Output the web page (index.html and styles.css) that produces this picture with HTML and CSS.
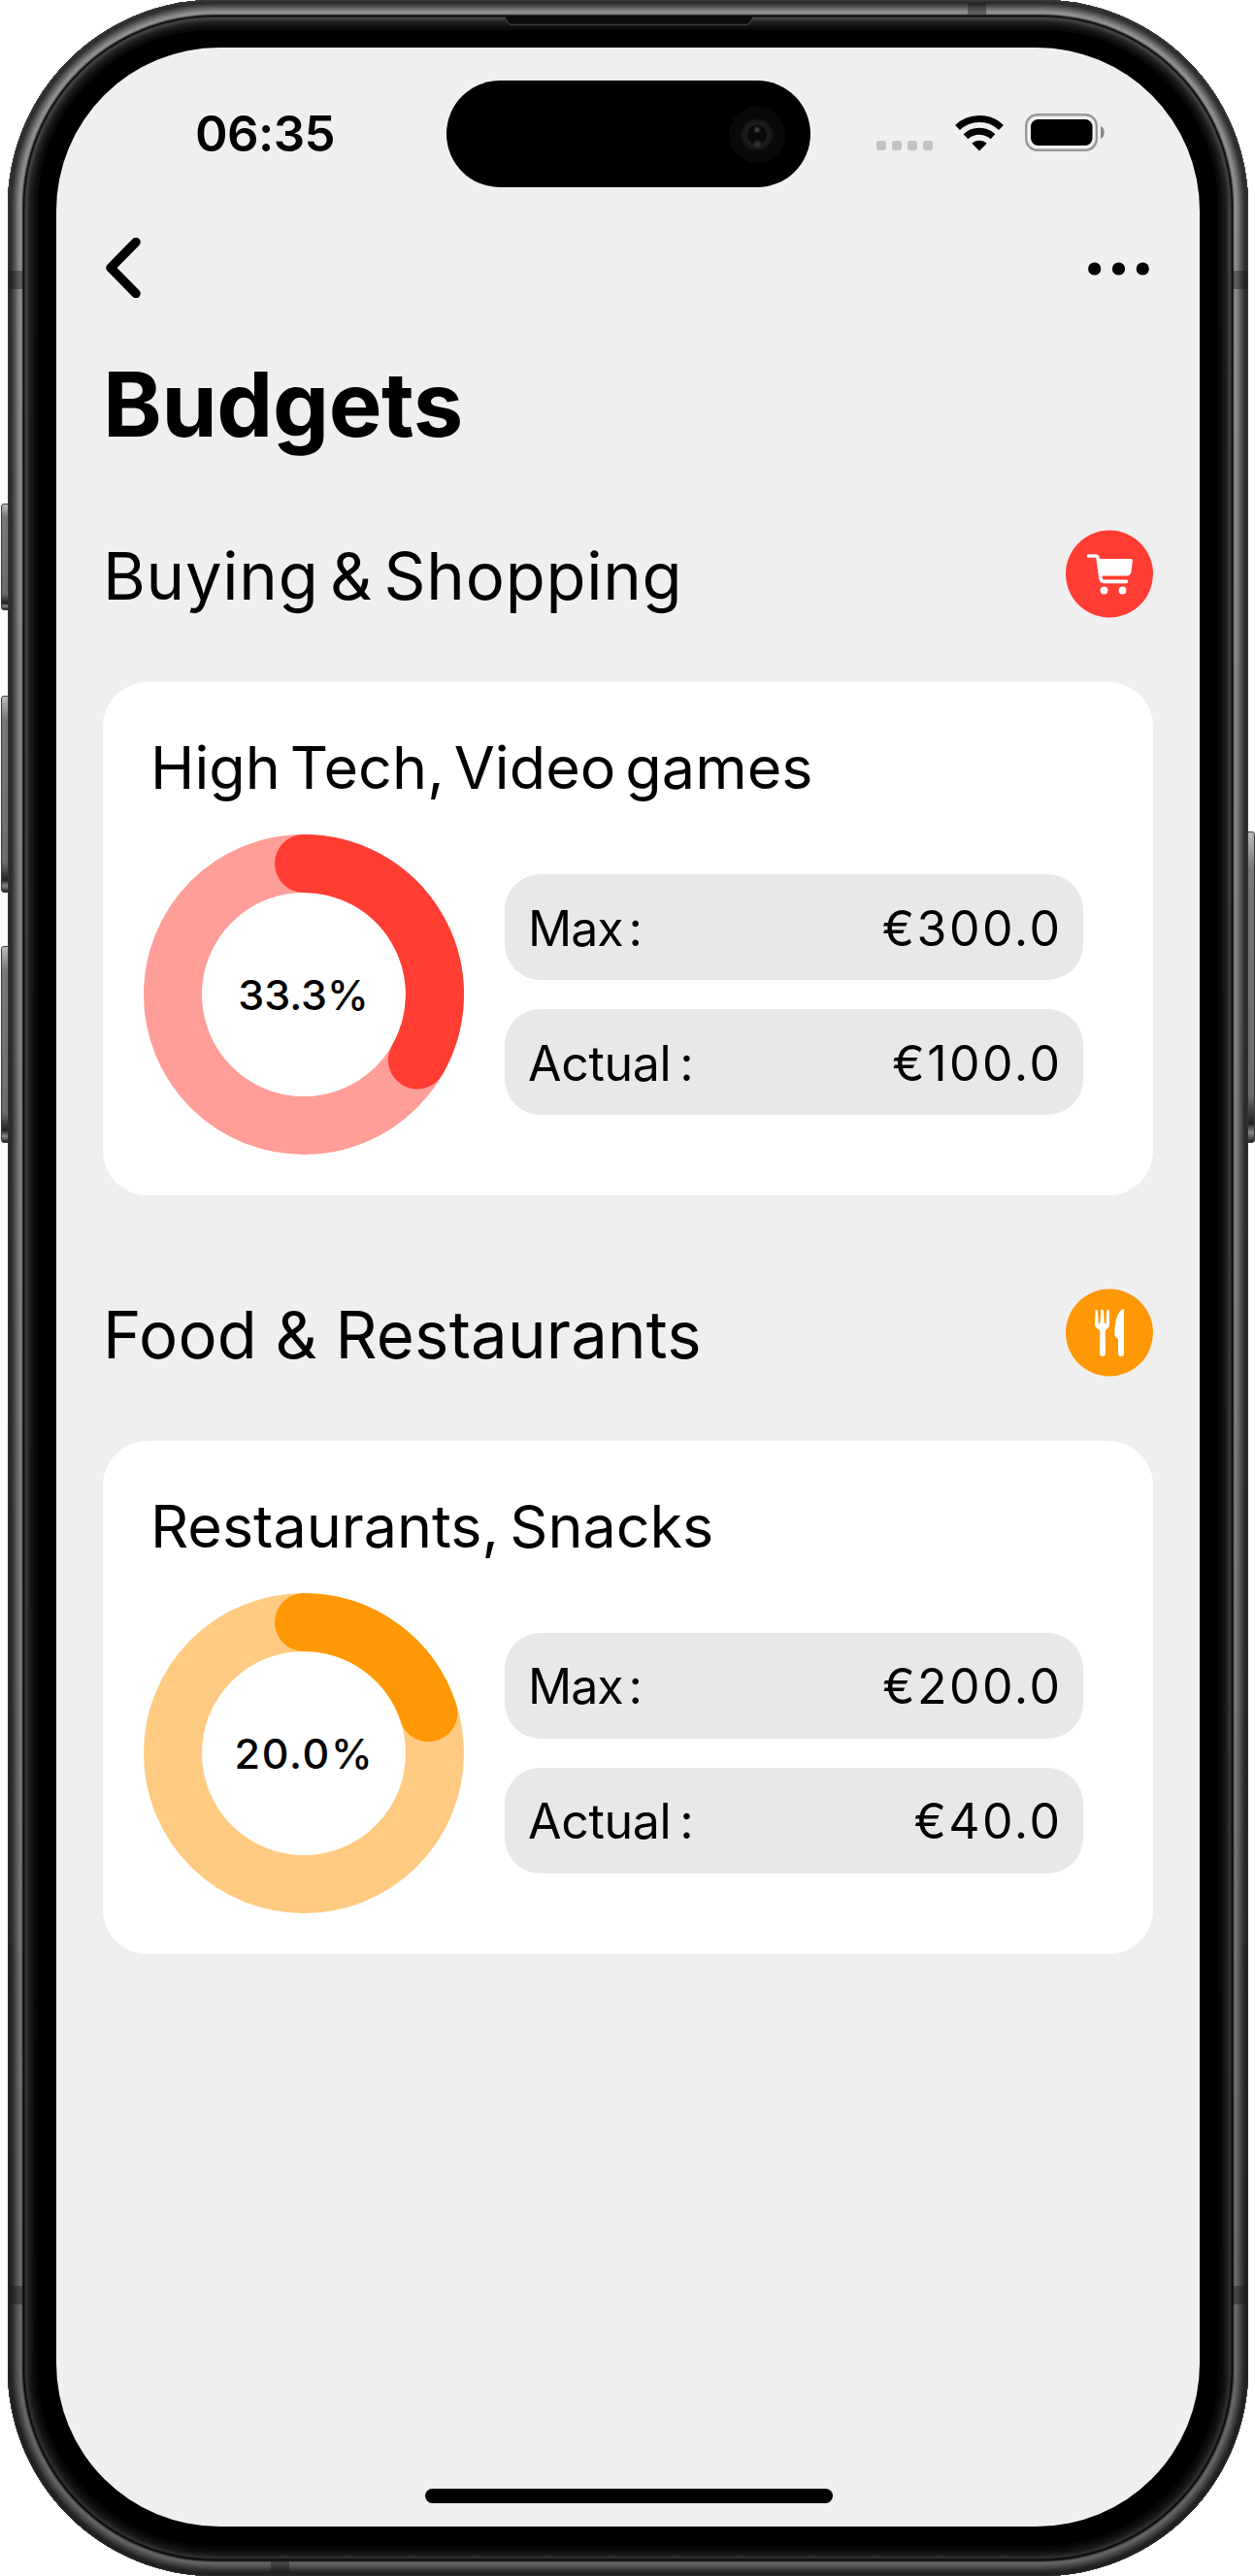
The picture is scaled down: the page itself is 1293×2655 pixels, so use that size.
FILE: index.html
```
<!DOCTYPE html>
<html lang="en">
<head>
<meta charset="utf-8">
<title>Budgets</title>
<link rel="stylesheet" href="styles.css">
</head>
<body>
<div class="device">
  <span class="key key-action"></span>
  <span class="key key-up"></span>
  <span class="key key-down"></span>
  <span class="key key-power"></span>
  <div class="frame">
    <span class="band band-lt"></span>
    <span class="band band-lb"></span>
    <span class="band band-rt"></span>
    <span class="band band-rb"></span>
    <span class="band band-top"></span>
    <span class="band band-bottom"></span>
    <svg class="speaker" viewBox="0 0 258 10"><path d="M0 0C4 3 3 8 8 8.500H250C255 8 254 3 258 0Z" fill="#0c0c0c"/><path d="M0 0C4 3 3 8 8 8.500H250C255 8 254 3 258 0" fill="none" stroke="#3a3a3a" stroke-width="1.300"/></svg>
    <main class="screen">
      <header class="status">
        <span class="clock">06:35</span>
        <div class="island"><span class="camera"></span></div>
        <div class="indicators">
          <svg class="signal" viewBox="0 0 58 10" fill="#c2c2c2"><rect width="10" height="10" rx="3"/><rect x="16" width="10" height="10" rx="3"/><rect x="32" width="10" height="10" rx="3"/><rect x="48" width="10" height="10" rx="3"/></svg>
          <svg class="wifi" viewBox="0 0 50 38"><g fill="none" stroke="#000" stroke-width="7"><path d="M2.500 13.500A32.500 32.500 0 0 1 47.500 13.500"/><path d="M11 22.700A20.500 20.500 0 0 1 39 22.700"/></g><path d="M25 37.500L17.300 29.800A11.500 11.500 0 0 1 32.700 29.800Z"/></svg>
          <svg class="battery" viewBox="0 0 83 39"><rect x="1.200" y="1.200" width="72.600" height="36.600" rx="11.500" fill="none" stroke="#989898" stroke-width="2.400"/><rect x="6" y="6" width="63.500" height="27" rx="7.500"/><path d="M78 13C83 15 83 24 78 26Z" fill="#888"/></svg>
        </div>
      </header>
      <nav class="toolbar">
        <svg class="back" viewBox="0 0 36 62"><path d="M31 4.500L5 31L31 57.500" fill="none" stroke="#000" stroke-width="9.500" stroke-linecap="round" stroke-linejoin="round"/></svg>
        <svg class="more" viewBox="0 0 63 14"><circle cx="6.700" cy="7" r="6.600"/><circle cx="31.500" cy="7" r="6.600"/><circle cx="56.300" cy="7" r="6.600"/></svg>
      </nav>
      <h1 class="title">Budgets</h1>
      <section class="group">
        <div class="group-head">
          <h2 class="group-name buying">Buying &amp; Shopping</h2>
          <svg class="badge" viewBox="0 0 90 90"><circle cx="45" cy="45" r="45" fill="#ff3d33"/><path d="M23.500 26.500H30.500Q32.800 26.500 33.200 29L36 49.500Q36.500 52.800 39.500 52.800H62.500" fill="none" stroke="#fff" stroke-width="3.700" stroke-linecap="round" stroke-linejoin="round"/><path d="M32 29.500H67.500Q69 29.500 68.900 31L67.500 42.500Q66.800 47 62.500 47H35Z" fill="#fff"/><circle cx="39.500" cy="62" r="3.900" fill="#fff"/><circle cx="58.500" cy="62" r="3.900" fill="#fff"/></svg>
        </div>
        <article class="card">
          <h3 class="card-name tech">High Tech, Video games</h3>
          <div class="card-body">
            <div class="ring">
              <svg viewBox="0 0 330 330" fill="none" stroke-width="60"><circle cx="165" cy="165" r="135" stroke="#ff9e98"/><path d="M165 30A135 135 0 0 1 281.900 232.500" stroke="#ff3d33" stroke-linecap="round"/></svg>
              <span class="percent">33.3%</span>
            </div>
            <dl class="figures">
              <div class="figure"><dt class="max">Max :</dt><dd>€300.0</dd></div>
              <div class="figure"><dt>Actual :</dt><dd>€100.0</dd></div>
            </dl>
          </div>
        </article>
      </section>
      <section class="group">
        <div class="group-head">
          <h2 class="group-name food">Food &amp; Restaurants</h2>
          <svg class="badge" viewBox="0 0 90 90"><circle cx="45" cy="45" r="45" fill="#ff9805"/><path fill="#fff" d="M30.500 22Q31.500 20.500 33 22L33.700 35Q34.600 36.500 35.500 35L36.200 22Q37.600 20.500 39 22L39.700 35Q40.600 36.500 41.500 35L42.200 22Q43.700 20.500 45 22V36Q45 39.500 42 41.500Q40.600 42.500 40.700 44L41 66Q41 69.500 38 69.500T35 66L35.300 44Q35.300 42.500 33.500 41.500Q30 39.500 30 36ZM60 21.500V66Q60 69.500 57 69.500T54 66V51.500L51 49Q50.200 48.300 50.300 46.500C50.500 36 52 27 57 22Q59.500 19.800 60 21.500Z"/></svg>
        </div>
        <article class="card">
          <h3 class="card-name snacks">Restaurants, Snacks</h3>
          <div class="card-body">
            <div class="ring">
              <svg viewBox="0 0 330 330" fill="none" stroke-width="60"><circle cx="165" cy="165" r="135" stroke="#ffcb82"/><path d="M165 30A135 135 0 0 1 293.400 123.300" stroke="#ff9805" stroke-linecap="round"/></svg>
              <span class="percent wide">20.0%</span>
            </div>
            <dl class="figures">
              <div class="figure"><dt class="max">Max :</dt><dd>€200.0</dd></div>
              <div class="figure"><dt>Actual :</dt><dd>€40.0</dd></div>
            </dl>
          </div>
        </article>
      </section>
      <span class="home"></span>
    </main>
  </div>
</div>
</body>
</html>
```
FILE: styles.css
```
* { box-sizing: border-box; margin: 0; padding: 0; }
body { background: #fff; font-family: Inter, "Open Sans", sans-serif; color: #000; }
svg { display: block; flex: none; }
.device { position: relative; width: 1293px; height: 2655px; padding: 0 7px 0 8px; overflow: hidden; }
.key { position: absolute; left: 1px; width: 9px; border-radius: 3px 0 0 3px; border: 1px solid #3a3a3a; background: linear-gradient(180deg, #bbb 0, #777 12%, #6a6d6c 85%, #222 94%, #888 97%, #222 100%); }
.key-action { top: 519px; height: 110px; }
.key-up { top: 717px; height: 203px; }
.key-down { top: 975px; height: 203px; }
.key-power { left: auto; right: 0; top: 857px; height: 321px; border-radius: 0 3px 3px 0; }
.frame {
  position: relative; width: 1278px; height: 2655px; padding: 49px 50px 51px; border-radius: 213px; background: #000;
  box-shadow:
    inset 0 0 0 1px #3a3d3c, inset 0 0 0 2px #2b2d2c, inset 0 0 0 4px #2f3130, inset 0 0 0 5px #383a39,
    inset 0 0 0 6px #434544, inset 0 0 0 7px #4e504f, inset 0 0 0 8px #595a59, inset 0 0 0 9px #656665,
    inset 0 0 0 10px #727271, inset 0 0 0 11px #7d7d7b, inset 0 0 0 12px #888886, inset 0 0 0 14px #90908e,
    inset 0 0 0 15px #777775, inset 0 0 0 16px #353535, inset 0 0 0 17px #080808, inset 0 0 0 18px #2a2a2a,
    inset 0 0 0 20px #404040, inset 0 0 0 21px #333, inset 0 0 0 22px #2c2c2c, inset 0 0 0 24px #202020,
    inset 0 0 0 26px #181818, inset 0 0 0 28px #101010, inset 0 0 0 31px #090909;
}
.frame::before { content: ""; position: absolute; inset: 0; border-radius: inherit; background: linear-gradient(180deg, rgba(0,0,0,0) 0, rgba(0,0,0,.12) 50%, rgba(0,0,0,.32) 100%); }
.band { position: absolute; background: rgba(20,22,21,.4); }
.band-lt, .band-lb, .band-rt, .band-rb { width: 15px; height: 19px; left: 1px; }
.band-lt, .band-rt { top: 279px; }
.band-lb, .band-rb { top: 2356px; }
.band-rt, .band-rb { left: auto; right: 1px; }
.band-top, .band-bottom { width: 19px; height: 12px; }
.band-top { left: 989px; top: 3px; }
.band-bottom { left: 271px; bottom: 3px; }
.speaker { position: absolute; left: 511px; top: 17px; width: 258px; height: 10px; }
.screen { position: relative; height: 2555px; padding: 0 48px; border-radius: 168px; background: #efefef; display: flex; flex-direction: column; }
.status { height: 144px; padding-top: 34px; display: flex; align-items: flex-start; }
.clock { width: 353.500px; padding-left: 95px; font-size: 51px; line-height: 62px; margin-top: 24px; font-weight: 600; letter-spacing: -.6px; }
.island { width: 375.500px; height: 110px; border-radius: 55px; background: #000; padding: 27px 26px; display: flex; justify-content: flex-end; }
.camera { width: 58px; height: 58px; border-radius: 50%; background: radial-gradient(circle at 50% 41%, #555 0, transparent 4px), radial-gradient(circle at 51% 66%, #3a3a3a 0, transparent 5px), radial-gradient(circle, #090909 9px, #1d1d1d 11px, #171717 15px, #090909 17px); }
.indicators { display: flex; margin: 34px 0 0 68px; }
.signal { width: 58px; height: 10px; margin-top: 28px; }
.wifi { width: 50px; height: 38px; margin: 1px 0 0 22.500px; }
.battery { width: 83px; height: 39px; margin-left: 22px; }
.toolbar { height: 124px; padding: 52px 4px 0 3px; display: flex; justify-content: space-between; }
.back { width: 36px; height: 62px; }
.more { width: 63px; height: 14px; margin-top: 25px; }
.title { height: 229px; padding-top: 44px; font-size: 92px; line-height: 112px; font-weight: 700; letter-spacing: -.4px; white-space: nowrap; }
.group { height: 781.500px; }
.group-head { height: 157px; display: flex; justify-content: space-between; align-items: flex-start; }
.group-name { font-size: 67px; line-height: 80px; font-weight: 400; margin-top: 8px; white-space: nowrap; }
.buying { letter-spacing: .75px; word-spacing: -8px; }
.food { letter-spacing: .2px; word-spacing: -.5px; }
.badge { width: 90px; height: 91px; }
.card { width: 1082px; height: 529px; padding: 48px 72px 0 42px; border-radius: 46px; background: #fff; }
.card-name { font-size: 61px; line-height: 80px; font-weight: 400; padding-left: 7px; white-space: nowrap; }
.tech { letter-spacing: .1px; word-spacing: -7.500px; }
.snacks { letter-spacing: 0; word-spacing: -6px; }
.card-body { display: flex; align-items: flex-start; margin-top: 29px; }
.ring { display: grid; place-items: center; width: 330px; height: 330px; }
.ring > * { grid-area: 1 / 1; }
.percent { font-size: 43px; line-height: 52px; font-weight: 500; margin-right: 1px; }
.percent.wide { letter-spacing: 1.700px; margin-right: -1px; }
.figures { margin: 41px 0 0 42px; display: flex; flex-direction: column; gap: 30px; width: 596px; }
.figure { height: 109px; padding: 2px 24px 0; border-radius: 37px; background: #e8e8e7; display: flex; justify-content: space-between; align-items: center; font-size: 50px; font-weight: 400; white-space: nowrap; }
.figure dt { letter-spacing: -.3px; word-spacing: -5px; }
.figure .max { letter-spacing: -1px; word-spacing: -7px; }
.figure dd { letter-spacing: 2.500px; margin-right: -2.500px; }
.home { position: absolute; left: 379.500px; bottom: 24px; width: 420px; height: 15px; border-radius: 8px; background: #000; }
```
